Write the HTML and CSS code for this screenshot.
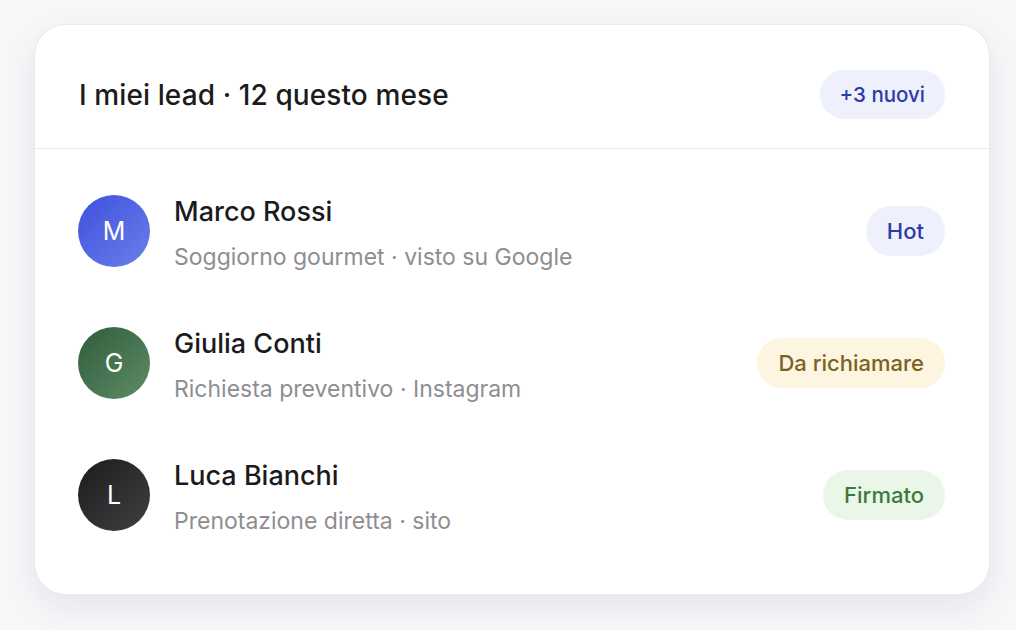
FILE: index.html
```html
<!DOCTYPE html>
<html lang="it">
<head>
  <meta charset="UTF-8" />
  <meta name="viewport" content="width=device-width, initial-scale=1.0" />
  <title>I miei lead</title>
  <link rel="stylesheet" href="styles.css">
</head>
<body>
  <div class="card">
    <header class="card-head">
      <h1>I miei lead · 12 questo mese</h1>
      <span class="pill pill-blue pill-count">+3 nuovi</span>
    </header>

    <ul class="leads">
      <li class="lead">
        <div class="avatar av-blue">M</div>
        <div class="info">
          <div class="name">Marco Rossi</div>
          <div class="meta">Soggiorno gourmet · visto su Google</div>
        </div>
        <span class="pill pill-blue">Hot</span>
      </li>
      <li class="lead">
        <div class="avatar av-green">G</div>
        <div class="info">
          <div class="name">Giulia Conti</div>
          <div class="meta">Richiesta preventivo · Instagram</div>
        </div>
        <span class="pill pill-yellow">Da richiamare</span>
      </li>
      <li class="lead">
        <div class="avatar av-dark">L</div>
        <div class="info">
          <div class="name">Luca Bianchi</div>
          <div class="meta">Prenotazione diretta · sito</div>
        </div>
        <span class="pill pill-green">Firmato</span>
      </li>
    </ul>
  </div>
</body>
</html>
```

FILE: styles.css
```css
:root {
  --bg: #f6f7f9;
  --card: #ffffff;
  --line: #e9eaee;
  --text: #1b1b1d;
  --muted: #8e8e91;
}

* {
  box-sizing: border-box;
  margin: 0;
  padding: 0;
}

html, body {
  background-color: var(--bg);
  min-height: 100vh;
  overflow: hidden;
}

body {
  font-family: 'Inter', 'Noto Sans', sans-serif;
  color: var(--text);
  padding: 24px 26px 0 34px;
}

.card {
  width: 956px;
  height: 571px;
  background: var(--card);
  border: 1px solid var(--line);
  border-radius: 32px;
  box-shadow: 0 12px 32px rgba(20, 24, 40, 0.08);
}

.card-head {
  height: 124px;
  display: flex;
  align-items: center;
  justify-content: space-between;
  padding: 16px 44px 0;
  border-bottom: 1px solid var(--line);
}

.card-head h1 {
  font-size: 28px;
  font-weight: 500;
  letter-spacing: 0.1px;
}

.pill {
  display: inline-flex;
  align-items: center;
  height: 50px;
  padding: 0 21px;
  border-radius: 25px;
  font-size: 22px;
  font-weight: 500;
}

.pill-count {
  height: 49px;
  padding: 0 20px;
  font-size: 20.5px;
}

.pill-blue {
  background: #eef0fc;
  color: #2c3ca6;
}

.pill-yellow {
  background: #fdf5e0;
  color: #7b6222;
}

.pill-green {
  background: #eaf6e7;
  color: #3b7a3b;
}

.leads {
  list-style: none;
  padding: 16px 44px 0 43px;
}

.lead {
  height: 132px;
  display: flex;
  align-items: center;
  gap: 24px;
}

.avatar {
  width: 72px;
  height: 72px;
  border-radius: 50%;
  display: flex;
  align-items: center;
  justify-content: center;
  color: #fff;
  font-size: 25px;
  font-weight: 400;
  flex-shrink: 0;
}

.av-blue {
  background: linear-gradient(135deg, #3e51de, #6b7fe9);
}

.av-green {
  background: linear-gradient(135deg, #2f5d3b, #5e8c66);
}

.av-dark {
  background: linear-gradient(135deg, #1c1c1e, #404042);
}

.info {
  flex: 1;
  display: flex;
  flex-direction: column;
  gap: 15px;
  margin-top: 4px;
}

.name {
  font-size: 27px;
  font-weight: 500;
  line-height: 32px;
}

.meta {
  font-size: 23px;
  color: var(--muted);
  line-height: 28px;
}
```
